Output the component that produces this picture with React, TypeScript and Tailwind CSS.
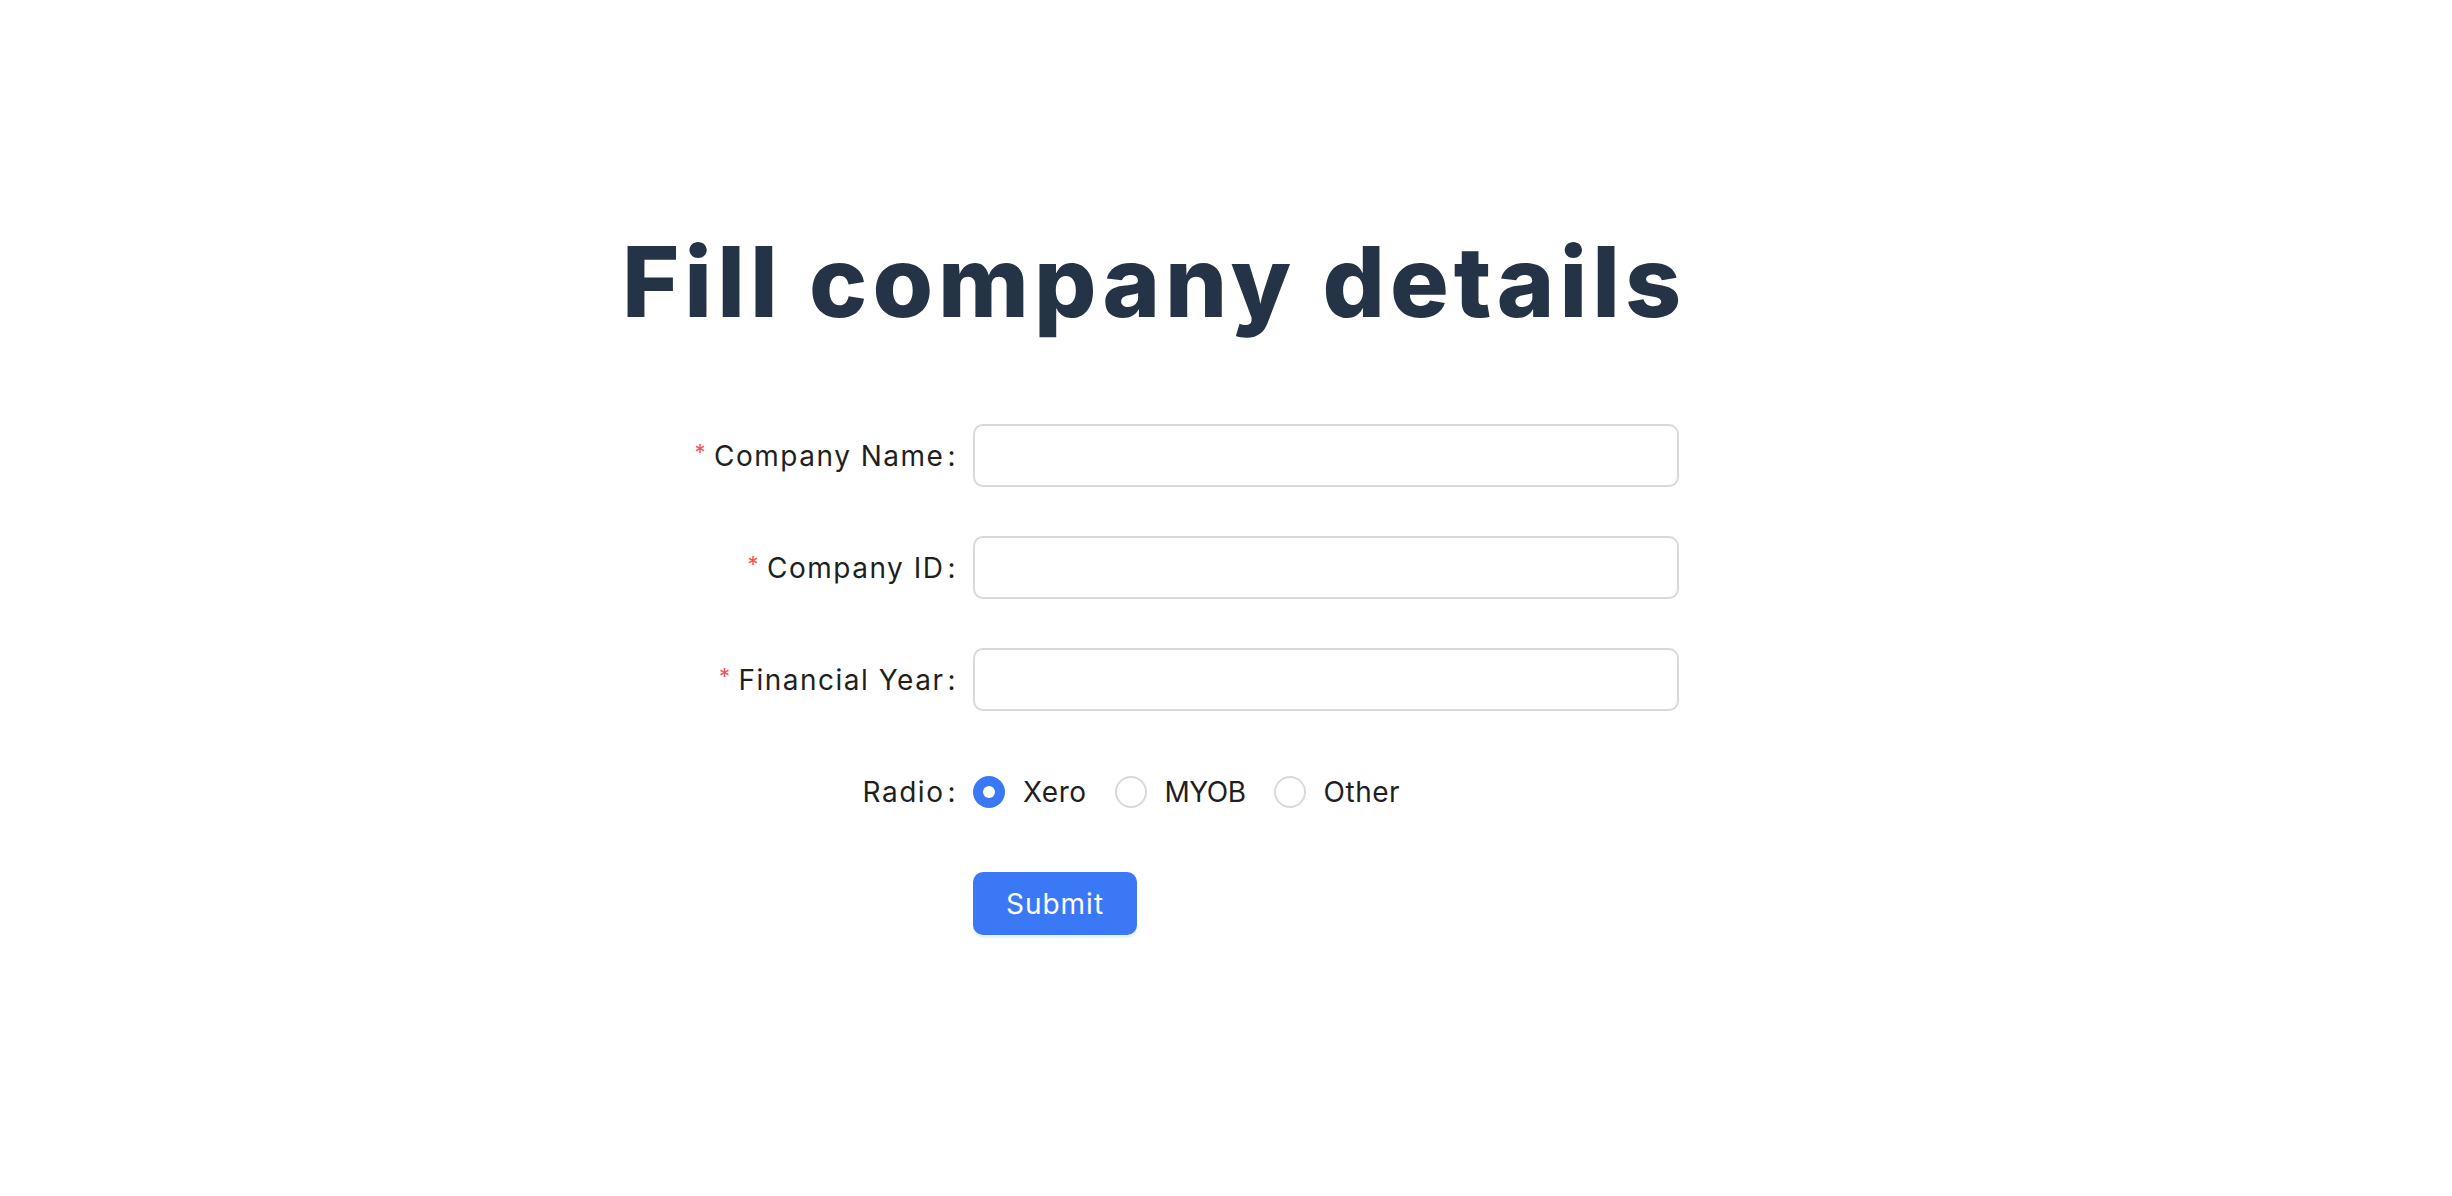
import React, { useState } from "react";

const fields = ["Company Name", "Company ID", "Financial Year"];
const options = ["Xero", "MYOB", "Other"];

const Label = ({ text, required }: { text: string; required?: boolean }) => (
  <div className="flex items-center justify-end pr-[16px] text-[28px] tracking-[1.5px] text-[#1f1f1f]">
    {required && <span className="mr-[7px] text-[22px] text-[#ff4d4f] relative -top-[3px]">*</span>}
    <span>{text}</span>
    <span className="ml-[3px]">:</span>
  </div>
);

export default function App() {
  const [choice, setChoice] = useState("Xero");

  return (
    <div className="min-h-screen bg-white font-['Inter',sans-serif]">
      <div className="pl-[620px] pt-[233px]">
        <h1 className="text-[98px] font-extrabold leading-none tracking-[5px] text-[#243346] pl-[2px]">
          Fill company details
        </h1>

        <form className="mt-[93px] grid grid-cols-[353px_706px] auto-rows-[63px] gap-y-[49px]">
          {fields.map((f) => (
            <React.Fragment key={f}>
              <Label text={f} required />
              <input
                className="h-[63px] w-full rounded-[10px] border-2 border-[#d9d9d9] bg-white px-4 text-[27px] outline-none"
                type="text"
              />
            </React.Fragment>
          ))}

          <Label text="Radio" />
          <div className="flex items-center gap-[28px] text-[28px] tracking-[0.5px] text-[#1f1f1f]">
            {options.map((o) => (
              <label key={o} className="flex cursor-pointer items-center" onClick={() => setChoice(o)}>
                {choice === o ? (
                  <span className="flex h-[32px] w-[32px] items-center justify-center rounded-full bg-[#3b78f5]">
                    <span className="h-[12px] w-[12px] rounded-full bg-white" />
                  </span>
                ) : (
                  <span className="h-[32px] w-[32px] rounded-full border-2 border-[#d9d9d9] bg-white" />
                )}
                <span className={o === "MYOB" ? "ml-[18px] tracking-[-0.5px]" : "ml-[18px]"}>{o}</span>
              </label>
            ))}
          </div>

          <div />
          <div>
            <button
              type="button"
              className="h-[63px] w-[164px] rounded-[10px] bg-[#3b78f5] text-[28px] tracking-[1px] text-white shadow-[0_3px_0_rgba(5,145,255,0.1)]"
            >
              Submit
            </button>
          </div>
        </form>
      </div>
    </div>
  );
}
